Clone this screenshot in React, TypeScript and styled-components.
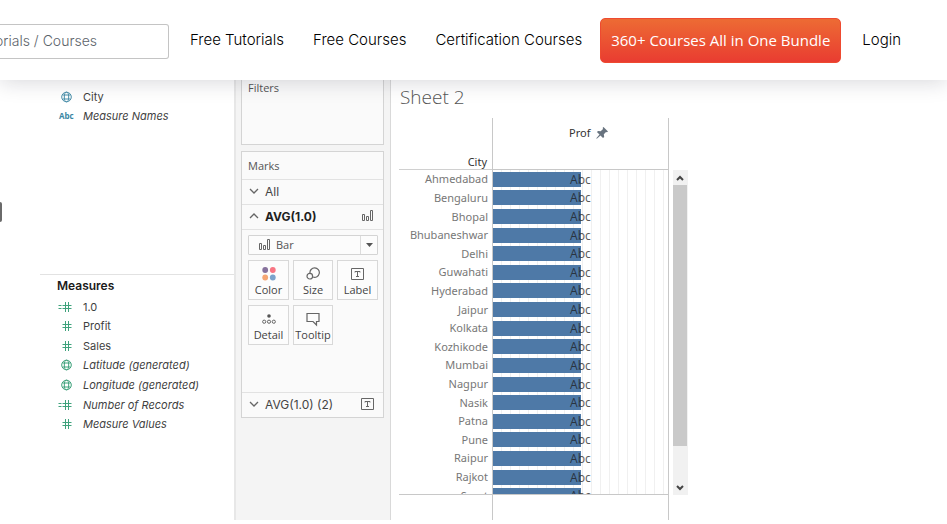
import React from 'react';
import styled, { createGlobalStyle, css } from 'styled-components';

const Global = createGlobalStyle`
  *, *::before, *::after { box-sizing: border-box; }
  body { margin: 0; background: #fff; color: #333; font-family: "Inter", sans-serif; overflow: hidden; }
  button, input { font-family: inherit; }
`;

/* ---------- site header ---------- */

const Header = styled.header`
  position: relative;
  z-index: 2;
  display: flex;
  align-items: center;
  height: 80px;
  background: #fff;
  box-shadow: 0 2px 20px rgba(20, 20, 40, 0.17);
`;

const Search = styled.input`
  width: 169px;
  height: 35px;
  margin: 3px 21px 0 0;
  padding: 0 0 2px;
  border: 1px solid #c4c4c4;
  border-left: 0;
  border-radius: 0 3px 3px 0;
  background: #fff;
  font-size: 14px;
  font-weight: 300;
  text-indent: -5px;
  &::placeholder { color: #5c636a; opacity: 1; }
`;

const Nav = styled.nav`
  display: flex;
  align-items: center;
  gap: 29px;
`;

const NavLink = styled.a`
  color: #000;
  font-size: 15px;
  font-weight: 300;
  line-height: 20px;
  text-decoration: none;
  white-space: nowrap;
`;

const BundleLink = styled.a`
  margin: 0 21px 0 18px;
  padding: 11px 10px 12px;
  border: 1px solid #ee4a30;
  border-radius: 5px;
  background: linear-gradient(#ed6b34, #e93c31);
  color: #fff;
  font: 400 15px/20px "Open Sans", sans-serif;
  text-decoration: none;
  white-space: nowrap;
`;

/* ---------- workspace ---------- */

const Workspace = styled.main`
  position: relative;
  display: grid;
  grid-template-columns: 234px 157px minmax(0, 1fr);
  min-height: 440px;
`;

const EdgeTab = styled.div`
  position: absolute;
  left: 0;
  top: 122px;
  width: 2px;
  height: 20px;
  border-radius: 0 2px 2px 0;
  background: #6a6a6a;
`;

const DataPane = styled.aside`
  display: flex;
  flex-direction: column;
  padding-left: 40px;
`;

const Dimensions = styled.section`
  height: 194px;
  padding-top: 7px;
`;

const Measures = styled.section`
  padding-top: 2px;
  border-top: 1px solid #e2e2e2;
`;

const PaneTitle = styled.h2`
  margin: 0 0 3px;
  padding-left: 17px;
  color: #1b1b1b;
  font-size: 12px;
  font-weight: 600;
  line-height: 17px;
`;

const FieldList = styled.ul<{ $height: number }>`
  display: grid;
  grid-auto-rows: 1fr;
  height: ${(p) => p.$height}px;
  margin: 0;
  padding: 0;
  list-style: none;
`;

const Field = styled.li<{ $generated?: boolean }>`
  display: grid;
  grid-template-columns: 20px 1fr;
  align-items: center;
  column-gap: 6px;
  padding-left: 17px;
  color: #3f3f3f;
  font-size: 11px;
  line-height: 16px;
  ${(p) => p.$generated && css`font-style: italic;`}
`;

const FieldIcon = styled.svg`
  display: block;
  width: 20px;
  height: 12px;
  fill: none;
`;

const AbcIcon = styled.span`
  padding-left: 2px;
  color: #3b86a3;
  font: 700 8px/12px "Open Sans", sans-serif;
`;

/* ---------- shelves ---------- */

const Shelves = styled.aside`
  display: flex;
  flex-direction: column;
  gap: 6px;
  padding: 0 6px;
  border-left: 2px solid #e7e7e7;
  border-right: 1px solid #d9d9d9;
  background: #f4f4f4;
  font-family: "Open Sans", sans-serif;
`;

const Card = styled.section<{ $cut?: boolean }>`
  margin-left: -1px;
  border: 1px solid #d4d4d4;
  background: #fafafa;
  ${(p) => p.$cut && css`height: 65px; border-top: 0;`}
`;

const CardTitle = styled.h3<{ $tall?: boolean }>`
  margin: 0;
  padding-left: 6px;
  color: #555;
  font-size: 11px;
  font-weight: 400;
  line-height: ${(p) => (p.$tall ? 27 : 16)}px;
`;

const MarkRow = styled.button<{ $strong?: boolean }>`
  display: grid;
  grid-template-columns: 10px 1fr 14px;
  align-items: center;
  column-gap: 6px;
  width: 100%;
  height: 25px;
  padding: 0 8px 2px 7px;
  border: 0;
  border-top: 1px solid #e2e2e2;
  background: transparent;
  color: ${(p) => (p.$strong ? '#1f1f1f' : '#444')};
  font-family: "Inter", sans-serif;
  font-size: 12px;
  font-weight: ${(p) => (p.$strong ? 700 : 400)};
  text-align: left;
`;

const MarkBody = styled.div`
  display: grid;
  grid-template-columns: 41px 40px 41px;
  justify-content: space-between;
  align-content: start;
  row-gap: 5px;
  height: 163px;
  padding: 5px 5px 0 6px;
  border-top: 1px solid #e2e2e2;
`;

const TypePicker = styled.button`
  display: grid;
  grid-template-columns: 14px 1fr 17px;
  grid-column: 1 / -1;
  align-items: center;
  column-gap: 4px;
  height: 20px;
  padding: 0 0 0 9px;
  border: 1px solid #d4d4d4;
  border-radius: 1px;
  background: #fcfcfc;
  color: #555;
  font-size: 11px;
  line-height: 16px;
  text-align: left;
`;

const PickerArrow = styled.span`
  display: grid;
  place-items: center;
  height: 18px;
  border-left: 1px solid #dcdcdc;
`;

const MarkButton = styled.button`
  display: flex;
  flex-direction: column;
  align-items: center;
  height: 40px;
  padding: 4px 0 0;
  border: 1px solid #d8d8d8;
  background: #fcfcfc;
  color: #444;
  font-size: 11px;
  line-height: 16px;
  white-space: nowrap;
`;

const Glyph = styled.svg<{ $w: number; $h: number }>`
  display: block;
  width: ${(p) => p.$w}px;
  height: ${(p) => p.$h}px;
  fill: none;
  stroke: #666;
`;

/* ---------- sheet ---------- */

const Sheet = styled.section`
  padding: 3px 0 0 8px;
  font-family: "Noto Sans", sans-serif;
`;

const SheetTitle = styled.h1`
  margin: 0 0 7px 1px;
  color: #555;
  font: 300 19px/28px "Open Sans", sans-serif;
`;

const ChartFrame = styled.div`
  display: flex;
  gap: 4px;
`;

const Viewport = styled.div`
  height: 377px;
  overflow: hidden;
  border-bottom: 1px solid #c8c8c8;
`;

const Chart = styled.table`
  width: 270px;
  height: 387px;
  border-collapse: separate;
  border-spacing: 0;
  table-layout: fixed;
  font-size: 11px;
  line-height: 14px;
`;

const CornerCell = styled.th`
  width: 93px;
  height: 52px;
  padding: 0 5px 0 0;
  border-bottom: 1px solid #d0d0d0;
  color: #333;
  font-weight: 400;
  text-align: right;
  vertical-align: bottom;
`;

const MeasureCell = styled.th`
  padding: 0 0 29px 0;
  border: solid #c8c8c8;
  border-width: 0 1px 1px;
  color: #333;
  font-weight: 400;
  vertical-align: bottom;
`;

const MeasureLabel = styled.span`
  display: flex;
  align-items: center;
  gap: 6px;
  padding-left: 76px;
`;

const CityCell = styled.th`
  padding: 0 4px 0 0;
  color: #777;
  font-weight: 400;
  text-align: right;
`;

const BarCell = styled.td`
  padding: 0;
  border: solid #c8c8c8;
  border-width: 0 1px;
  background: repeating-linear-gradient(90deg, transparent 0 8px, #f0f0f0 8px 9px);
`;

const Bar = styled.div`
  width: 50%;
  height: 15px;
  padding-left: 77px;
  background: #4e79a7;
  color: rgba(30, 30, 30, 0.75);
  font-size: 12px;
  line-height: 16px;
`;

const Footer = styled.div`
  width: 177px;
  height: 25px;
  margin-left: 93px;
  border: solid #c8c8c8;
  border-width: 0 1px;
`;

const Scroller = styled.div`
  display: grid;
  grid-template-rows: 15px 261px 1fr;
  width: 15px;
  margin-top: 52px;
  background: #f1f1f1;
`;

const ScrollButton = styled.button`
  display: grid;
  place-items: center;
  align-self: end;
  height: 15px;
  padding: 0 2px 0 0;
  border: 0;
  background: transparent;
`;

const Thumb = styled.div`
  margin-right: 1px;
  background: #c9c9c9;
`;

type IconKind = 'globe' | 'hash' | 'calc' | 'abc';

function FieldGlyph({ kind, tone = '#3fa27c' }: { kind: IconKind; tone?: string }) {
  if (kind === 'abc') return <AbcIcon>Abc</AbcIcon>;
  if (kind === 'globe')
    return (
      <FieldIcon viewBox="0 0 20 12" stroke={tone}>
        <circle cx="9.5" cy="6" r="4.8" />
        <ellipse cx="9.5" cy="6" rx="2.2" ry="4.8" />
        <path d="M5.5 4h8M5.5 8h8" />
      </FieldIcon>
    );
  return (
    <FieldIcon viewBox="0 0 20 12" stroke={tone}>
      <path d="M8.5 1v10M11.5 1v10M5.5 4.5h9M5.5 7.5h9" />
      {kind === 'calc' && <path d="M1.5 4.5h3M1.5 7.5h3" />}
    </FieldIcon>
  );
}

const BarsGlyph = () => (
  <Glyph $w={14} $h={12} viewBox="0 0 14 12">
    <path d="M1.5 4.5h2v6h-2zM5.500 6.500h2v4h-2zM9.500 .5h2v10h-2z" />
  </Glyph>
);
const TextGlyph = () => (
  <Glyph $w={13} $h={12} viewBox="0 0 13 12">
    <path d="M.5 .5h12v11H.5zM4 4.5V3.5h5v1M6.5 3.5v5M5 8.5h3" />
  </Glyph>
);
const Chevron = ({ up }: { up?: boolean }) => (
  <Glyph $w={10} $h={6} viewBox="0 0 10 6">
    <path strokeWidth="1.3" d={up ? 'M1 5l4-4 4 4' : 'M1 1l4 4 4-4'} />
  </Glyph>
);
const ScrollChevron = ({ up }: { up?: boolean }) => (
  <Glyph $w={8} $h={6} viewBox="0 0 8 6">
    <path stroke="#444" strokeWidth="2" d={up ? 'M1 5l3-3 3 3' : 'M1 1l3 3 3-3'} />
  </Glyph>
);
const ColorGlyph = () => (
  <Glyph $w={14} $h={17} viewBox="0 0 14 17">
    <g stroke="none">
      <circle cx="3.2" cy="5" r="2.9" fill="#86719c" />
      <circle cx="10.8" cy="5" r="2.9" fill="#f87583" />
      <circle cx="3.2" cy="12.5" r="2.9" fill="#f5a673" />
      <circle cx="10.8" cy="12.5" r="2.9" fill="#7ba3cc" />
    </g>
  </Glyph>
);
const SizeGlyph = () => (
  <Glyph $w={14} $h={17} viewBox="0 0 14 17">
    <path strokeWidth="1.2" d="M4 8.3A4.700 4.700 0 1 1 7 12" />
    <circle strokeWidth="1.2" cx="3.8" cy="11.2" r="2.8" />
  </Glyph>
);
const LabelGlyph = () => (
  <Glyph $w={13} $h={17} viewBox="0 0 13 17">
    <path d="M.5 3.5h12v11H.5zM4 7.5v-1h5v1M6.5 6.5v5M5 11.5h3" />
  </Glyph>
);
const DetailGlyph = () => (
  <Glyph $w={14} $h={17} viewBox="0 0 14 17">
    <circle cx="7" cy="6" r="1.8" fill="#555" stroke="none" />
    <circle cx="2.2" cy="11.7" r="1.6" />
    <circle cx="7" cy="11.7" r="1.6" />
    <circle cx="11.8" cy="11.7" r="1.6" />
  </Glyph>
);
const TooltipGlyph = () => (
  <Glyph $w={14} $h={17} viewBox="0 0 14 17">
    <path strokeWidth="1.2" d="M1 3.5h12v8h-2.5V15L7 11.5H1z" />
  </Glyph>
);
const PinGlyph = () => (
  <Glyph $w={12} $h={12} viewBox="0 0 12 12">
    <path fill="#68737f" stroke="none" d="M7.5 0L12 4.5l-1 .8-1-.2-2.2 2.2.4 2.7-1.2 1L4.500 8.500.8 11.700l-.5-.5L3.500 7.500.9 5l1.200-1.100 2.600.3L7 2l-.3-1.200z" />
  </Glyph>
);

const measures: { name: string; kind: IconKind; generated?: boolean }[] = [
  { name: '1.0', kind: 'calc' },
  { name: 'Profit', kind: 'hash' },
  { name: 'Sales', kind: 'hash' },
  { name: 'Latitude (generated)', kind: 'globe', generated: true },
  { name: 'Longitude (generated)', kind: 'globe', generated: true },
  { name: 'Number of Records', kind: 'calc', generated: true },
  { name: 'Measure Values', kind: 'hash', generated: true },
];

const markButtons = [
  { name: 'Color', Icon: ColorGlyph },
  { name: 'Size', Icon: SizeGlyph },
  { name: 'Label', Icon: LabelGlyph },
  { name: 'Detail', Icon: DetailGlyph },
  { name: 'Tooltip', Icon: TooltipGlyph },
];

const cities = [
  'Ahmedabad', 'Bengaluru', 'Bhopal', 'Bhubaneshwar', 'Delhi', 'Guwahati',
  'Hyderabad', 'Jaipur', 'Kolkata', 'Kozhikode', 'Mumbai', 'Nagpur',
  'Nasik', 'Patna', 'Pune', 'Raipur', 'Rajkot', 'Surat',
];

export default function App() {
  return (
    <>
      <Global />
      <Header>
        <Search type="search" aria-label="Search tutorials and courses" placeholder="orials / Courses" />
        <Nav>
          <NavLink href="#tutorials">Free Tutorials</NavLink>
          <NavLink href="#courses">Free Courses</NavLink>
          <NavLink href="#certification">Certification Courses</NavLink>
        </Nav>
        <BundleLink href="#bundle">360+ Courses All in One Bundle</BundleLink>
        <NavLink href="#login">Login</NavLink>
      </Header>

      <Workspace>
        <EdgeTab />
        <DataPane>
          <Dimensions>
            <FieldList $height={39}>
              <Field><FieldGlyph kind="globe" tone="#4a90ab" />City</Field>
              <Field $generated><FieldGlyph kind="abc" />Measure Names</Field>
            </FieldList>
          </Dimensions>
          <Measures>
            <PaneTitle>Measures</PaneTitle>
            <FieldList $height={137}>
              {measures.map((m) => (
                <Field key={m.name} $generated={m.generated}>
                  <FieldGlyph kind={m.kind} />
                  {m.name}
                </Field>
              ))}
            </FieldList>
          </Measures>
        </DataPane>

        <Shelves>
          <Card $cut>
            <CardTitle>Filters</CardTitle>
          </Card>
          <Card>
            <CardTitle $tall>Marks</CardTitle>
            <MarkRow><Chevron />All</MarkRow>
            <MarkRow $strong><Chevron up />AVG(1.0)<BarsGlyph /></MarkRow>
            <MarkBody>
              <TypePicker aria-haspopup="listbox">
                <BarsGlyph />
                Bar
                <PickerArrow>
                  <Glyph $w={7} $h={4} viewBox="0 0 7 4"><path fill="#555" stroke="none" d="M0 0h7L3.500 4z" /></Glyph>
                </PickerArrow>
              </TypePicker>
              {markButtons.map(({ name, Icon }) => (
                <MarkButton key={name}><Icon />{name}</MarkButton>
              ))}
            </MarkBody>
            <MarkRow><Chevron />AVG(1.0) (2)<TextGlyph /></MarkRow>
          </Card>
        </Shelves>

        <Sheet>
          <SheetTitle>Sheet 2</SheetTitle>
          <ChartFrame>
            <Viewport>
              <Chart>
                <thead>
                  <tr>
                    <CornerCell scope="col">City</CornerCell>
                    <MeasureCell scope="col"><MeasureLabel>Prof<PinGlyph /></MeasureLabel></MeasureCell>
                  </tr>
                </thead>
                <tbody>
                  {cities.map((city) => (
                    <tr key={city}>
                      <CityCell scope="row">{city}</CityCell>
                      <BarCell><Bar>Abc</Bar></BarCell>
                    </tr>
                  ))}
                </tbody>
              </Chart>
            </Viewport>
            <Scroller>
              <ScrollButton aria-label="Scroll up"><ScrollChevron up /></ScrollButton>
              <Thumb />
              <ScrollButton aria-label="Scroll down"><ScrollChevron /></ScrollButton>
            </Scroller>
          </ChartFrame>
          <Footer />
        </Sheet>
      </Workspace>
    </>
  );
}
